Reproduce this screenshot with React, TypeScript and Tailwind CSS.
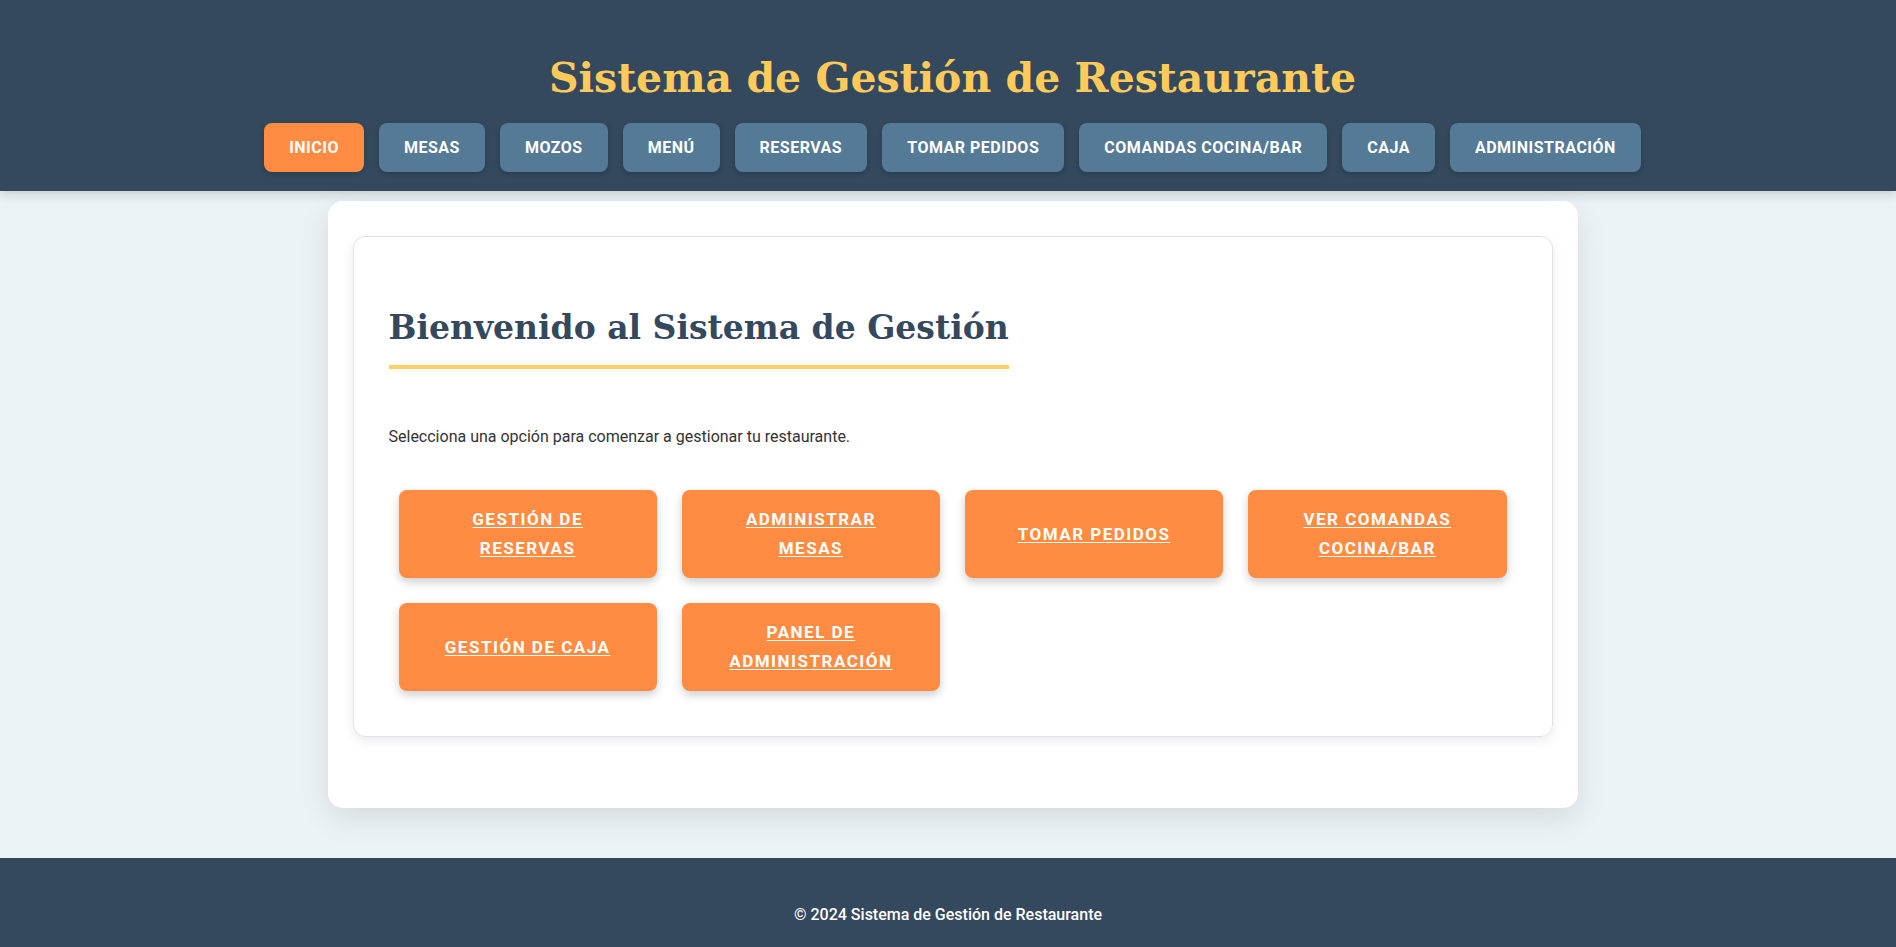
const navItems = [
  'Inicio',
  'Mesas',
  'Mozos',
  'Menú',
  'Reservas',
  'Tomar Pedidos',
  'Comandas Cocina/Bar',
  'Caja',
  'Administración',
];

const actions = [
  'Gestión de Reservas',
  'Administrar Mesas',
  'Tomar Pedidos',
  'Ver Comandas Cocina/Bar',
  'Gestión de Caja',
  'Panel de Administración',
];

export default function App() {
  return (
    <div className="min-h-screen bg-[#ecf3f6] font-['Roboto',sans-serif] text-[#333]">
      <header className="bg-[#34495e] pt-[50px] pb-[19px] pl-[9px] shadow-[0_4px_10px_rgba(0,0,0,0.15)]">
        <h1 className="text-center font-['DejaVu_Serif',serif] text-[41px] leading-[56px] font-bold text-[#fecb5b]">
          Sistema de Gestión de Restaurante
        </h1>
        <nav className="mt-[17px] flex justify-center gap-[15px]">
          {navItems.map((item, i) => (
            <a
              key={i}
              href="#"
              className={
                'rounded-lg px-[25px] py-[12px] text-[16px] leading-[25px] font-bold tracking-[0.5px] text-white uppercase shadow-[0_2px_5px_rgba(0,0,0,0.2)] ' +
                (i === 0 ? 'bg-[#ff8c42]' : 'bg-[#557a95]')
              }
            >
              {item}
            </a>
          ))}
        </nav>
      </header>

      <div className="pl-[9px]">
        <main className="mx-auto mt-[10px] w-[1250px] rounded-[15px] bg-white px-[25px] pt-[35px] pb-[71px] shadow-[0_10px_30px_rgba(0,0,0,0.1)]">
          <section className="rounded-xl border border-[#dfe2e6] px-[35px] pt-[69px] pb-[45px] shadow-[0_4px_12px_rgba(0,0,0,0.08)]">
            <h2 className="inline-block border-b-4 border-[#fed06a] pb-[15px] font-['DejaVu_Serif',serif] text-[33px] leading-[44px] font-bold text-[#34495e]">
              Bienvenido al Sistema de Gestión
            </h2>
            <p className="mt-[56px] text-[16px] leading-[24px] text-[#333]">
              Selecciona una opción para comenzar a gestionar tu restaurante.
            </p>
            <div className="mt-[41px] grid grid-cols-4 gap-[25px] px-[10px]">
              {actions.map((label, i) => (
                <a
                  key={i}
                  href="#"
                  className="flex items-center justify-center rounded-lg bg-[#ff8c42] px-[35px] py-[15px] text-center text-[17px] leading-[29px] font-bold tracking-[1.5px] text-white uppercase underline underline-offset-2 shadow-[0_4px_10px_rgba(0,0,0,0.2)]"
                >
                  {label}
                </a>
              ))}
            </div>
          </section>
        </main>
      </div>

      <footer className="mt-[50px] bg-[#34495e] pt-[47px] pb-[48px] text-center text-[16px] leading-[20px] font-medium text-white">
        © 2024 Sistema de Gestión de Restaurante
      </footer>
    </div>
  );
}
